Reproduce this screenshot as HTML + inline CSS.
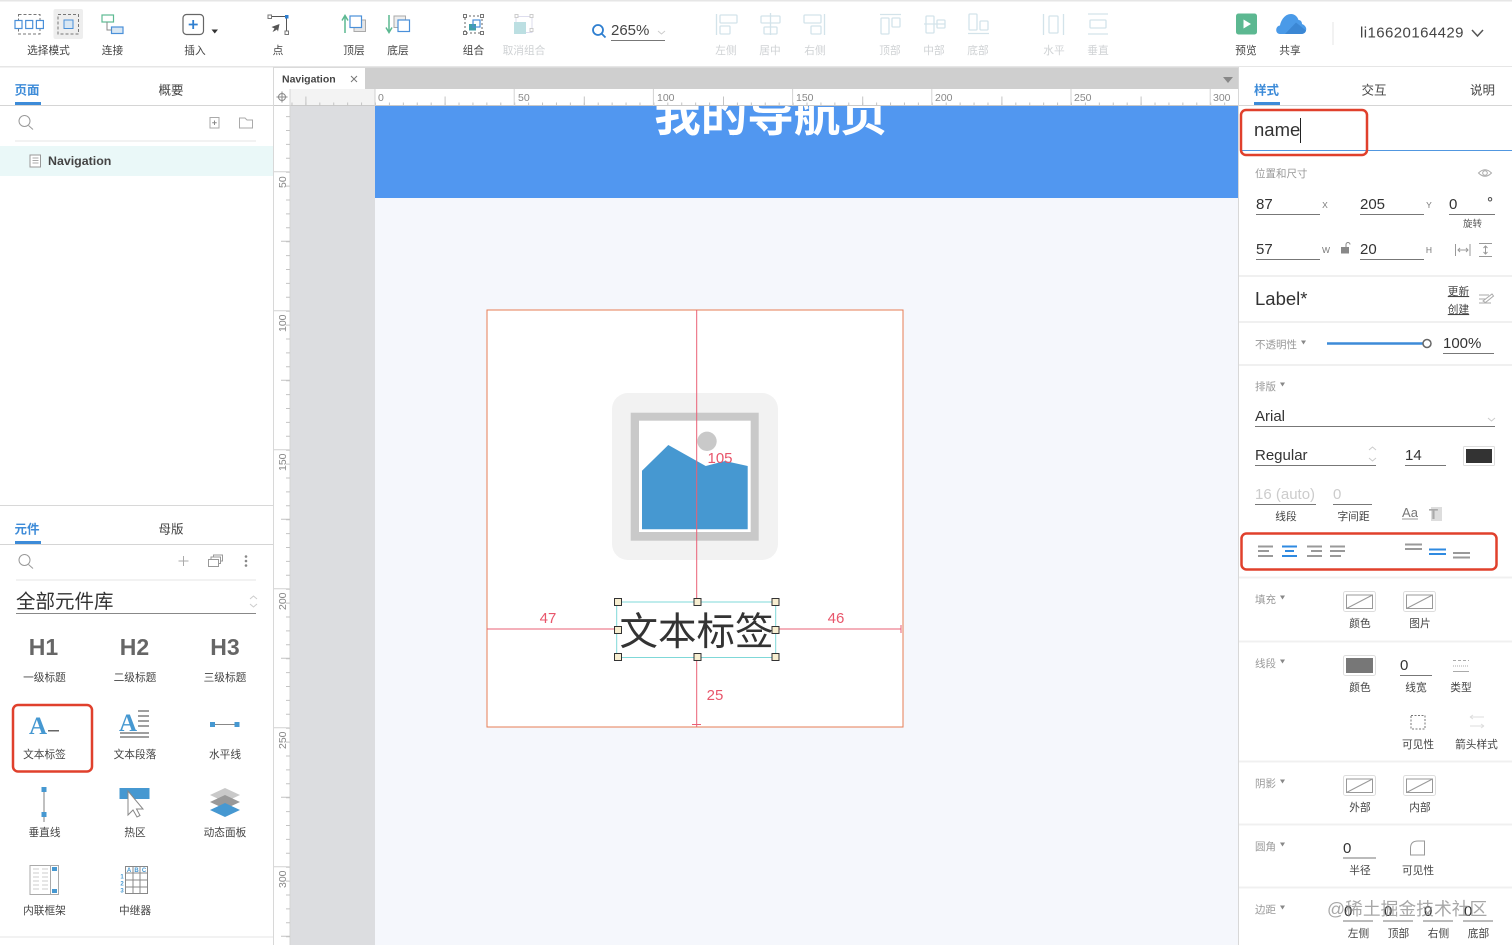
<!DOCTYPE html>
<html><head><meta charset="utf-8">
<style>
html,body{margin:0;padding:0;background:#fff;width:1512px;height:945px;overflow:hidden}
svg{display:block;position:absolute;left:0;top:0;filter:blur(.3px)}
text{font-family:"Liberation Sans","Noto Sans CJK SC",sans-serif;fill:#444}
.m{text-anchor:middle}
.tb{font-size:10.7px;fill:#444;text-anchor:middle}
.fd{font-size:10.7px;fill:#cfd2d4;text-anchor:middle}
.tab{font-size:12.5px;fill:#444;text-anchor:middle}
.act{fill:#3d8bd8;font-weight:700}
.sec{font-size:10.5px;fill:#999}
.lb{font-size:10.7px;fill:#444;text-anchor:middle}
.val{font-size:15px;fill:#333}
.ax{font-size:8.5px;fill:#777;text-anchor:middle}
.rl{font-size:10.5px;fill:#888}
.red{font-size:15px;fill:#e8566b;text-anchor:middle}
.ul{stroke:#777;stroke-width:1;fill:none}
.sp{stroke:#f0f0f0;stroke-width:2}
.g{fill:none;stroke:#888;stroke-width:1}
.fa{fill:none;stroke:#d3e3ea;stroke-width:1.3}
.tri{fill:#888}
.h{fill:#f7eed0;stroke:#333;stroke-width:1}
</style></head>
<body>
<svg width="1512" height="945" viewBox="0 0 1512 945" xmlns="http://www.w3.org/2000/svg">
<rect width="1512" height="945" fill="#fff"/>
<rect width="1512" height="1.5" fill="#e6e6e6"/>

<!-- canvas -->
<rect x="375" y="106" width="863" height="839" fill="#f5f7fc"/>
<rect x="290" y="106" width="85" height="839" fill="#dcdde0"/>
<rect x="375" y="106" width="863" height="92" fill="#5197f0"/>
<text x="770.500" y="131" class="m" style="font-size:46.500px;font-weight:700;fill:#fff">我的导航页</text>

<!-- tab bar + rulers -->
<rect x="274" y="67" width="964" height="22" fill="#cfcfcf"/>
<rect x="274" y="68" width="91" height="21" fill="#fff"/>
<text x="282" y="82.5" style="font-size:10.5px;font-weight:700;fill:#444">Navigation</text>
<path d="M351 76l6 6M357 76l-6 6" stroke="#777" fill="none"/>
<path d="M1223 77h10l-5 6z" fill="#888"/>
<rect x="274" y="89" width="964" height="17" fill="#fff"/>
<rect x="290" y="89" width="85" height="17" fill="#f3f3f3"/>
<rect x="274" y="106" width="16" height="839" fill="#fff"/>
<line x1="274" y1="105.500" x2="1238" y2="105.500" stroke="#c9c9c9"/>
<line x1="290" y1="89" x2="290" y2="945" stroke="#d5d5d5"/>
<circle cx="282" cy="97" r="3.500" fill="none" stroke="#888"/><path d="M282 91.500v11M276.500 97h11" stroke="#888" fill="none"/>
<!-- horizontal ticks -->
<line x1="291.480" y1="104" x2="1238" y2="104" stroke="#c4c4c4" stroke-width="3" stroke-dasharray="1 12.92"/>
<line x1="305.400" y1="101" x2="1238" y2="101" stroke="#c4c4c4" stroke-width="9" stroke-dasharray="1 138.2"/>
<path d="M375 89v17M514.200 89v17M653.400 89v17M792.600 89v17M931.800 89v17M1071 89v17M1210.200 89v17" stroke="#d2d2d2" fill="none"/>
<text x="378" y="101" class="rl">0</text><text x="518" y="101" class="rl">50</text><text x="657" y="101" class="rl">100</text><text x="796" y="101" class="rl">150</text><text x="935" y="101" class="rl">200</text><text x="1074" y="101" class="rl">250</text><text x="1213" y="101" class="rl">300</text>
<!-- vertical ticks -->
<line x1="288" y1="116.100" x2="288" y2="945" stroke="#c4c4c4" stroke-width="4" stroke-dasharray="1 12.9"/>
<path d="M281 241.200h9M281 380.200h9M281 519.200h9M281 658.200h9M281 797.200h9M281 936.200h9" stroke="#c4c4c4" fill="none"/>
<path d="M274 171.700h16M274 310.700h16M274 449.700h16M274 588.700h16M274 727.700h16M274 866.700h16" stroke="#d2d2d2" fill="none"/>
<g class="rl">
<text transform="translate(286,188) rotate(-90)" class="rl">50</text>
<text transform="translate(286,332) rotate(-90)" class="rl">100</text>
<text transform="translate(286,471) rotate(-90)" class="rl">150</text>
<text transform="translate(286,610) rotate(-90)" class="rl">200</text>
<text transform="translate(286,749) rotate(-90)" class="rl">250</text>
<text transform="translate(286,888) rotate(-90)" class="rl">300</text>
</g>

<!-- page frame -->
<rect x="487" y="310" width="416" height="417" fill="#fff" stroke="#e67c55"/>
<rect x="612" y="393" width="166" height="167" rx="16" fill="#f2f2f2"/>
<rect x="630.700" y="412.700" width="128" height="128" fill="#c9c9c9"/>
<rect x="639" y="420.700" width="111.700" height="111.300" fill="#fff"/>
<circle cx="707" cy="441.300" r="9.700" fill="#c9c9c9"/>
<path d="M642 470.700L668.300 445L705.700 466L725 461L747.700 466V529.300H642Z" fill="#4698d1"/>
<path d="M696.700 310V727M487 629H617M777 629H901M901 625V633M692 724.500H701" stroke="#ea6075" fill="none"/>
<text x="720" y="463" class="red">105</text>
<text x="548" y="623" class="red">47</text>
<text x="836" y="623" class="red">46</text>
<text x="715" y="700" class="red">25</text>
<rect x="616.700" y="602" width="159" height="55.500" fill="#fff" stroke="#7fd8d8"/>
<text x="696.500" y="645" class="m" style="font-size:38.500px;fill:#333">文本标签</text>
<rect x="614.500" y="598.500" width="7" height="7" class="h"/><rect x="694" y="598.500" width="7" height="7" class="h"/><rect x="772" y="598.500" width="7" height="7" class="h"/>
<rect x="614.500" y="626.500" width="7" height="7" class="h"/><rect x="772" y="626.500" width="7" height="7" class="h"/>
<rect x="614.500" y="653.500" width="7" height="7" class="h"/><rect x="694" y="653.500" width="7" height="7" class="h"/><rect x="772" y="653.500" width="7" height="7" class="h"/>

<!-- toolbar -->
<rect x="0" y="66" width="1512" height="1.500" fill="#e6e6e6"/>
<rect x="53.500" y="9" width="29.500" height="30" rx="2" fill="#eee"/>
<rect x="18.500" y="14.500" width="21.500" height="19.500" fill="none" stroke="#777" stroke-dasharray="3 2"/>
<g fill="#fff" stroke="#4a90d9" stroke-width="1.200"><rect x="15" y="20.500" width="7" height="8"/><rect x="25.700" y="20.500" width="7" height="8"/><rect x="36.400" y="20.500" width="7" height="8"/></g>
<rect x="58" y="14.500" width="20.500" height="19.500" fill="none" stroke="#777" stroke-dasharray="3 2"/>
<rect x="64" y="20" width="9" height="8.500" fill="#d9e7f3" stroke="#4a90d9"/>
<rect x="102" y="15" width="11.500" height="7" fill="#fff" stroke="#5dba92" stroke-width="1.200"/>
<rect x="111.500" y="27" width="11.500" height="6.500" fill="#d9e7f3" stroke="#4a90d9" stroke-width="1.200"/>
<path d="M107 22v8h4.500" fill="none" stroke="#888"/>
<rect x="183" y="14.500" width="20.500" height="20" rx="3.500" fill="#fff" stroke="#666" stroke-width="1.200"/>
<path d="M193.200 20v9M188.700 24.500h9" stroke="#2f7fd0" stroke-width="1.800" fill="none"/>
<path d="M211.500 29.500h6.500l-3.250 4z" fill="#333"/>
<path d="M270 16.500H286.500V32" fill="none" stroke="#555"/>
<rect x="268" y="15" width="3.500" height="3.500" fill="#fff" stroke="#777"/><rect x="285" y="15" width="3.500" height="3.500" fill="#2f7fd0"/><rect x="285" y="31" width="3.500" height="3.500" fill="#fff" stroke="#777"/>
<path d="M279.500 24L271.500 27L274.500 28.500L272.500 32L274.500 31L277 29.500L278 31.500Z" fill="#555"/>
<path d="M345 33V17M342 20.500L345 15.500L348 20.500" fill="none" stroke="#5cb891" stroke-width="1.500"/>
<rect x="354" y="20" width="11.500" height="11.500" fill="#e5e5e5" stroke="#aaa"/><rect x="350" y="16" width="11.500" height="11.500" fill="#fff" stroke="#4a90d9" stroke-width="1.200"/>
<path d="M389 15V31M386 27.500L389 32.500L392 27.500" fill="none" stroke="#5cb891" stroke-width="1.500"/>
<rect x="394" y="16" width="11.500" height="11.500" fill="#eee" stroke="#aaa"/><rect x="398" y="20" width="11.500" height="11.500" fill="#fff" stroke="#4a90d9" stroke-width="1.200"/>
<rect x="465" y="16" width="17" height="17" fill="none" stroke="#666" stroke-dasharray="2 2"/>
<g fill="#fff" stroke="#777"><rect x="463.500" y="14.500" width="3" height="3"/><rect x="480.500" y="14.500" width="3" height="3"/><rect x="463.500" y="31.500" width="3" height="3"/><rect x="480.500" y="31.500" width="3" height="3"/></g>
<rect x="469" y="24" width="7" height="6.500" fill="#41a0a8"/><rect x="473" y="20" width="7" height="7" fill="none" stroke="#4a90d9" stroke-width="1.200"/>
<rect x="516" y="16.500" width="16" height="16" fill="none" stroke="#dde"/>
<path d="M514 22H526V34H514Z" fill="#bcdfe2"/>
<g fill="#fff" stroke="#ccc"><rect x="530" y="14.500" width="3" height="3"/><rect x="530" y="28.500" width="3" height="3"/><rect x="515" y="14.500" width="3" height="3"/></g>
<text x="48.500" y="54" class="tb">选择模式</text><text x="112.500" y="54" class="tb">连接</text><text x="195" y="54" class="tb">插入</text><text x="278" y="54" class="tb">点</text><text x="354" y="54" class="tb">顶层</text><text x="398" y="54" class="tb">底层</text><text x="473.500" y="54" class="tb">组合</text><text x="524" y="54" class="fd">取消组合</text>

<circle cx="598" cy="30" r="5" fill="none" stroke="#2f7fd0" stroke-width="1.800"/><path d="M601.500 33.500L605.500 37.500" stroke="#2f7fd0" stroke-width="1.800" fill="none"/>
<text x="611" y="35" class="val" style="fill:#444">265%</text>
<line x1="611" y1="40.500" x2="665" y2="40.500" class="ul"/>
<path d="M658 31l3.500 3 3.500-3" fill="none" stroke="#ccc"/>

<!-- disabled align icons -->
<g class="fa">
<path d="M716.500 14v21"/><rect x="720" y="15" width="17" height="8" rx="1"/><rect x="720" y="26" width="10" height="8" rx="1"/>
<path d="M770.500 13v22"/><rect x="761" y="16" width="19" height="7" rx="1"/><rect x="764" y="27" width="13" height="7" rx="1"/>
<path d="M824.500 14v21"/><rect x="804" y="15" width="17" height="8" rx="1"/><rect x="811" y="26" width="10" height="8" rx="1"/>
<path d="M880 14.500h21"/><rect x="881" y="18" width="8" height="16" rx="1"/><rect x="892" y="18" width="8" height="9" rx="1"/>
<path d="M924 24h21"/><rect x="926" y="16" width="8" height="17" rx="1"/><rect x="937" y="20" width="8" height="8" rx="1"/>
<path d="M968 33.500h21"/><rect x="969" y="14" width="8" height="16" rx="1"/><rect x="980" y="21" width="8" height="9" rx="1"/>
<path d="M1043.500 14v21M1063.500 14v21"/><rect x="1049" y="16" width="9" height="17" rx="1"/>
<path d="M1088 14h20M1088 34h20"/><rect x="1090" y="20" width="16" height="8" rx="1"/>
</g>
<text x="726" y="54" class="fd">左侧</text><text x="770" y="54" class="fd">居中</text><text x="815" y="54" class="fd">右侧</text><text x="890" y="54" class="fd">顶部</text><text x="934" y="54" class="fd">中部</text><text x="978" y="54" class="fd">底部</text><text x="1054" y="54" class="fd">水平</text><text x="1098" y="54" class="fd">垂直</text>

<rect x="1236" y="13.500" width="21" height="21" rx="2.500" fill="#5cb891"/>
<path d="M1243.500 19.500L1251 24L1243.500 28.500Z" fill="#fff"/>
<path d="M1280 34C1275 34 1275 26 1280 25.500C1281 20 1285 14 1291 14C1295 14 1297.500 17 1298.500 20C1301 20 1302 22 1302 24C1305 25 1307 28 1306 30.500C1305.500 32.500 1304 34 1301 34Z" fill="#4a9ae8"/>
<path d="M1285 34L1296 22.500L1306 30.500C1305.500 32.500 1304 34 1301 34Z" fill="#3b87d4"/>
<text x="1246" y="54" class="tb">预览</text><text x="1290" y="54" class="tb">共享</text>
<line x1="1333" y1="22" x2="1333" y2="45" stroke="#eee" stroke-width="1.500"/>
<text x="1360" y="37.500" class="val" style="fill:#444;letter-spacing:.42px">li16620164429</text>
<path d="M1472 30l5.500 6 5.500-6" fill="none" stroke="#555" stroke-width="1.500"/>

<!-- left panel -->
<line x1="273.500" y1="67" x2="273.500" y2="945" stroke="#d8d8d8"/>
<text x="27" y="94.500" class="tab act">页面</text><text x="171" y="94.500" class="tab">概要</text>
<rect x="15" y="102" width="26" height="3" fill="#3d8bd8"/>
<line x1="0" y1="105.500" x2="273" y2="105.500" stroke="#d5d5d5"/>
<circle cx="24.500" cy="121" r="5.500" fill="none" stroke="#999"/><path d="M28.500 125.500L33 129.500" stroke="#999" fill="none"/>
<rect x="210" y="117.500" width="9" height="10.500" fill="none" stroke="#aaa"/><path d="M214.500 120.500v4.500M212.200 122.800h4.500" stroke="#888" fill="none"/>
<path d="M239.500 118H245L247 120H252.500V128H239.500Z" fill="none" stroke="#aaa"/>
<line x1="15" y1="141" x2="256" y2="141" stroke="#eee" stroke-width="1.500"/>
<rect x="0" y="146" width="273" height="30" fill="#eaf8f8"/>
<rect x="30" y="155" width="10.500" height="12" fill="#fff" stroke="#999"/><path d="M32.500 158h6M32.500 160.500h6M32.500 163h6" stroke="#aaa" fill="none"/>
<text x="48" y="165" style="font-size:12.400px;font-weight:700;fill:#444">Navigation</text>

<line x1="0" y1="505.500" x2="273" y2="505.500" stroke="#d8d8d8"/>
<text x="27" y="533.500" class="tab act">元件</text><text x="171" y="533.500" class="tab">母版</text>
<rect x="15" y="541" width="26" height="3" fill="#3d8bd8"/>
<line x1="0" y1="544.500" x2="273" y2="544.500" stroke="#d5d5d5"/>
<circle cx="24.500" cy="560" r="5.500" fill="none" stroke="#999"/><path d="M28.500 564.500L33 568.500" stroke="#999" fill="none"/>
<path d="M183.500 556v10M178.500 561h10" stroke="#aaa" fill="none"/>
<path d="M208.500 559.500h10v7h-10zM211 559.500v-2.500h9.500v6.500h-2M213.500 557v-2h9v6h-2" fill="none" stroke="#999"/>
<g fill="#888"><circle cx="246" cy="556.500" r="1.300"/><circle cx="246" cy="561" r="1.300"/><circle cx="246" cy="565.500" r="1.300"/></g>
<line x1="16" y1="580" x2="256" y2="580" stroke="#eee" stroke-width="1.500"/>
<text x="16" y="608" style="font-size:19.500px;fill:#333">全部元件库</text>
<line x1="16" y1="613.500" x2="256" y2="613.500" stroke="#888"/>
<path d="M250 599l3.500-3 3.500 3M250 604l3.500 3 3.500-3" fill="none" stroke="#ccc"/>
<text x="43.500" y="655" class="m" style="font-size:23px;font-weight:700;fill:#666">H1</text>
<text x="134.500" y="655" class="m" style="font-size:23px;font-weight:700;fill:#666">H2</text>
<text x="225" y="655" class="m" style="font-size:23px;font-weight:700;fill:#666">H3</text>
<text x="44.500" y="681" class="lb">一级标题</text><text x="135" y="681" class="lb">二级标题</text><text x="225" y="681" class="lb">三级标题</text>
<text x="38" y="734" class="m" style="font-family:'Liberation Serif',serif;font-size:25px;font-weight:700;fill:#4698d1">A</text>
<rect x="48" y="730" width="11" height="1.500" fill="#666"/>
<text x="128" y="731" class="m" style="font-family:'Liberation Serif',serif;font-size:25px;font-weight:700;fill:#4698d1">A</text>
<path d="M138 711h11M138 716h11M138 721h11M138 726h11M120 733h29M120 737h29" stroke="#666" stroke-width="1.200" fill="none"/>
<path d="M212 724.500h26" stroke="#888" fill="none"/><rect x="210" y="722" width="5" height="5" fill="#4698d1"/><rect x="234.500" y="722" width="5" height="5" fill="#4698d1"/>
<text x="44.500" y="758" class="lb">文本标签</text><text x="135" y="758" class="lb">文本段落</text><text x="225" y="758" class="lb">水平线</text>
<path d="M44 790v32" stroke="#aaa" stroke-width="1.500" fill="none"/><rect x="41.500" y="787" width="5" height="5" fill="#4698d1"/><rect x="41.500" y="812" width="5" height="5" fill="#4698d1"/>
<rect x="119.500" y="788" width="30" height="11" fill="#4698d1"/>
<path d="M128 791V815L133 810L137 817L140 815.500L136.500 809H143Z" fill="#fff" stroke="#888"/>
<path d="M225 788L240 795L225 802L210 795Z" fill="#c9c9c9"/><path d="M225 795L240 802L225 809L210 802Z" fill="#999"/><path d="M225 803L240 810L225 817L210 810Z" fill="#4698d1"/>
<text x="44.500" y="836" class="lb">垂直线</text><text x="135" y="836" class="lb">热区</text><text x="225" y="836" class="lb">动态面板</text>
<rect x="30" y="865.500" width="28.500" height="29" fill="#fff" stroke="#aaa"/>
<path d="M50.500 865.500v29" stroke="#aaa" fill="none"/><rect x="52" y="867" width="5" height="4" fill="#4698d1"/><rect x="52" y="889" width="5" height="4" fill="#4698d1"/>
<path d="M33 869h6M42 869h6M33 873h6M42 873h6M33 877h6M42 877h6M33 881h6M42 881h6M33 885h6M42 885h6M33 889h6M42 889h6" stroke="#ccc" fill="none"/>
<path d="M125.500 866.500h22v27h-22zM125.500 873h22M125.500 880h22M125.500 887h22M133 866.500v27M140 866.500v27" fill="#fff" stroke="#888"/>
<rect x="126" y="867" width="6.500" height="5.500" fill="#fff"/>
<text x="129" y="872" class="m" style="font-size:6px;font-weight:700;fill:#4698d1">A</text><text x="136.500" y="872" class="m" style="font-size:6px;font-weight:700;fill:#4698d1">B</text><text x="144" y="872" class="m" style="font-size:6px;font-weight:700;fill:#4698d1">C</text>
<text x="122" y="878.500" class="m" style="font-size:6px;font-weight:700;fill:#4698d1">1</text><text x="122" y="885.500" class="m" style="font-size:6px;font-weight:700;fill:#4698d1">2</text><text x="122" y="892.500" class="m" style="font-size:6px;font-weight:700;fill:#4698d1">3</text>
<text x="44.500" y="914" class="lb">内联框架</text><text x="135" y="914" class="lb">中继器</text>
<line x1="0" y1="937" x2="273" y2="937" stroke="#eee" stroke-width="1.500"/>
<rect x="13" y="705" width="79" height="66.500" rx="5" fill="none" stroke="#e0402c" stroke-width="2.500"/>

<!-- right panel -->
<rect x="1238" y="67" width="274" height="878" fill="#fff"/>
<line x1="1238.500" y1="67" x2="1238.500" y2="945" stroke="#d8d8d8"/>
<text x="1266.500" y="94.500" class="tab act">样式</text><text x="1374" y="94.500" class="tab">交互</text><text x="1482.500" y="94.500" class="tab">说明</text>
<rect x="1254" y="102" width="26" height="3" fill="#3d8bd8"/>
<line x1="1239" y1="105.500" x2="1512" y2="105.500" stroke="#d5d5d5"/>
<text x="1254" y="136" style="font-size:18.500px;fill:#333">name</text>
<line x1="1300.500" y1="118" x2="1300.500" y2="143" stroke="#222"/>
<line x1="1240" y1="150.500" x2="1512" y2="150.500" stroke="#5197e0"/>
<rect x="1241" y="110" width="126" height="45" rx="5" fill="none" stroke="#e0402c" stroke-width="2.500"/>

<text x="1255" y="177" class="sec">位置和尺寸</text>
<path d="M1478.500 173Q1485 166.500 1491.500 173Q1485 179.500 1478.500 173Z" fill="none" stroke="#aaa"/><circle cx="1485" cy="173" r="2.300" fill="none" stroke="#aaa"/>
<text x="1256" y="209" class="val">87</text><line x1="1256" y1="214.500" x2="1320" y2="214.500" class="ul"/><text x="1325" y="208" class="ax">X</text>
<text x="1360" y="209" class="val">205</text><line x1="1360" y1="214.500" x2="1424" y2="214.500" class="ul"/><text x="1429" y="208" class="ax">Y</text>
<text x="1449" y="209" class="val">0</text><text x="1490" y="207" class="m" style="font-size:14px;font-weight:700;fill:#555">°</text><line x1="1449" y1="214.500" x2="1495" y2="214.500" class="ul"/>
<text x="1472.500" y="227" class="m" style="font-size:9.500px;fill:#555">旋转</text>
<text x="1256" y="254" class="val">57</text><line x1="1256" y1="259.500" x2="1320" y2="259.500" class="ul"/><text x="1326" y="253" class="ax">W</text>
<rect x="1341" y="247" width="8" height="6.500" fill="#888"/><path d="M1346 247v-2.500a2 2 0 0 1 4 0" fill="none" stroke="#888"/>
<text x="1360" y="254" class="val">20</text><line x1="1360" y1="259.500" x2="1424" y2="259.500" class="ul"/><text x="1429" y="253" class="ax">H</text>
<path d="M1455.500 244v12M1470 244v12M1458 250h10M1460 248l-2 2 2 2M1466 248l2 2-2 2M1479 243.500h13M1479 256.500h13M1485.500 246v8M1483.500 248l2-2 2 2M1483.500 252l2 2 2-2" fill="none" stroke="#999"/>

<line x1="1239" y1="276" x2="1512" y2="276" class="sp"/>
<text x="1255" y="305" style="font-size:18.500px;fill:#333">Label*</text>
<text x="1458.500" y="295" class="lb" style="text-decoration:underline">更新</text><text x="1458.500" y="313" class="lb" style="text-decoration:underline">创建</text>
<path d="M1479 295h10M1479 299h7M1479 303h12M1483 301l9-7 1.500 2-8 6.500z" fill="none" stroke="#aaa"/>
<line x1="1239" y1="322" x2="1512" y2="322" class="sp"/>
<text x="1255" y="348" class="sec">不透明性</text><path d="M1301 340.500h5l-2.500 4z" class="tri"/>
<line x1="1327" y1="343.500" x2="1424" y2="343.500" stroke="#3d8bd8" stroke-width="2.500"/>
<circle cx="1427" cy="343.500" r="4" fill="#fff" stroke="#666" stroke-width="1.500"/>
<text x="1443" y="348" class="val">100%</text><line x1="1443" y1="353.500" x2="1494" y2="353.500" class="ul"/>
<line x1="1239" y1="365" x2="1512" y2="365" class="sp"/>
<text x="1255" y="390" class="sec">排版</text><path d="M1280 382.500h5l-2.500 4z" class="tri"/>
<text x="1255" y="421" class="val">Arial</text><line x1="1255" y1="426.500" x2="1495" y2="426.500" class="ul"/>
<path d="M1488 418l3.500 3 3.500-3" fill="none" stroke="#ccc"/>
<text x="1255" y="460" class="val">Regular</text><line x1="1255" y1="465.500" x2="1376" y2="465.500" class="ul"/>
<path d="M1369 450l3.500-3 3.500 3M1369 458l3.500 3 3.500-3" fill="none" stroke="#ccc"/>
<text x="1405" y="460" class="val">14</text><line x1="1405" y1="465.500" x2="1446" y2="465.500" class="ul"/>
<rect x="1463.500" y="446.500" width="31" height="19" rx="1" fill="#fff" stroke="#ddd"/><rect x="1466" y="449" width="26" height="14" fill="#333"/>
<text x="1255" y="499" class="val" style="fill:#ccc">16 (auto)</text><line x1="1255" y1="504.500" x2="1316" y2="504.500" class="ul"/>
<text x="1333" y="499" class="val" style="fill:#ccc">0</text><line x1="1333" y1="504.500" x2="1372" y2="504.500" class="ul"/>
<text x="1286" y="520" class="lb">线段</text><text x="1353.500" y="520" class="lb">字间距</text>
<text x="1410" y="517" class="m" style="font-size:13px;fill:#777">Aa</text><line x1="1402" y1="519" x2="1418" y2="519" stroke="#999"/>
<rect x="1431" y="507" width="11" height="14" fill="#ddd"/><text x="1433.500" y="519" class="m" style="font-size:15px;font-weight:700;fill:#aaa">T</text>

<g stroke="#999" stroke-width="2" fill="none">
<path d="M1258 546.500h15M1258 551h11M1258 556h15"/>
<path d="M1307 546.500h15M1311 551h11M1307 556h15"/>
<path d="M1330 546.500h15M1330 551h15M1330 556h11"/>
<path d="M1405 544.500h17M1405 549h17"/>
<path d="M1453 553h17M1453 557.500h17"/>
</g>
<g stroke="#2f8ae0" stroke-width="2" fill="none">
<path d="M1282 546.500h15M1285 551h9M1282 556h15"/>
<path d="M1429 549.500h17M1429 554h17"/>
</g>
<rect x="1241.500" y="533.500" width="255" height="36" rx="5" fill="none" stroke="#e0402c" stroke-width="2.500"/>
<line x1="1239" y1="577.500" x2="1512" y2="577.500" class="sp"/>

<g fill="#fff">
<rect x="1343.500" y="591.500" width="32" height="20" rx="2" stroke="#ddd"/><rect x="1346.500" y="595" width="26" height="13.500" stroke="#999"/><path d="M1346.500 608.500L1372.500 595" stroke="#999"/>
<rect x="1403.500" y="591.500" width="32" height="20" rx="2" stroke="#ddd"/><rect x="1406.500" y="595" width="26" height="13.500" stroke="#999"/><path d="M1406.500 608.500L1432.500 595" stroke="#999"/>
<rect x="1343.500" y="775.500" width="32" height="20" rx="2" stroke="#ddd"/><rect x="1346.500" y="779" width="26" height="13.500" stroke="#999"/><path d="M1346.500 792.500L1372.500 779" stroke="#999"/>
<rect x="1403.500" y="775.500" width="32" height="20" rx="2" stroke="#ddd"/><rect x="1406.500" y="779" width="26" height="13.500" stroke="#999"/><path d="M1406.500 792.500L1432.500 779" stroke="#999"/>
</g>
<text x="1255" y="603" class="sec">填充</text><path d="M1280 595.500h5l-2.500 4z" class="tri"/>
<text x="1360" y="627" class="lb">颜色</text><text x="1420" y="627" class="lb">图片</text>
<line x1="1239" y1="641.500" x2="1512" y2="641.500" class="sp"/>
<text x="1255" y="667" class="sec">线段</text><path d="M1280 659.500h5l-2.500 4z" class="tri"/>
<rect x="1343.500" y="655.500" width="32" height="20" rx="2" fill="#fff" stroke="#ddd"/><rect x="1346" y="658" width="27" height="15" fill="#777"/>
<text x="1400" y="670" class="val">0</text><line x1="1400" y1="675.500" x2="1432" y2="675.500" class="ul"/>
<path d="M1453 660.500h16" stroke="#aaa" stroke-dasharray="3 2" fill="none"/><path d="M1453 666h16" stroke="#aaa" stroke-dasharray="1 1" fill="none"/><path d="M1453 671.500h16" stroke="#aaa" fill="none"/>
<text x="1360" y="691" class="lb">颜色</text><text x="1416" y="691" class="lb">线宽</text><text x="1461" y="691" class="lb">类型</text>
<rect x="1411" y="715.500" width="14" height="13.500" fill="none" stroke="#777" stroke-dasharray="2 1.500"/>
<path d="M1470 717h14M1470 717l3-2M1470 717l3 2M1470 726h14M1484 726l-3-2M1484 726l-3 2" fill="none" stroke="#ddd"/>
<text x="1418" y="748" class="lb">可见性</text><text x="1476.500" y="748" class="lb">箭头样式</text>
<line x1="1239" y1="761.500" x2="1512" y2="761.500" class="sp"/>
<text x="1255" y="787" class="sec">阴影</text><path d="M1280 779.500h5l-2.500 4z" class="tri"/>
<text x="1360" y="811" class="lb">外部</text><text x="1420" y="811" class="lb">内部</text>
<line x1="1239" y1="824.500" x2="1512" y2="824.500" class="sp"/>
<text x="1255" y="850" class="sec">圆角</text><path d="M1280 842.500h5l-2.500 4z" class="tri"/>
<text x="1343" y="853" class="val">0</text><line x1="1343" y1="858" x2="1376" y2="858" class="ul"/>
<path d="M1410.500 855V848Q1410.500 841 1418 841H1424.500V855Z" fill="none" stroke="#999"/>
<text x="1360" y="874" class="lb">半径</text><text x="1418" y="874" class="lb">可见性</text>
<line x1="1239" y1="887.500" x2="1512" y2="887.500" class="sp"/>
<text x="1255" y="913" class="sec">边距</text><path d="M1280 905.500h5l-2.500 4z" class="tri"/>
<text x="1344" y="916" class="val">0</text><text x="1384" y="916" class="val">0</text><text x="1424" y="916" class="val">0</text><text x="1464" y="916" class="val">0</text>
<path d="M1343 921h30M1383 921h30M1423 921h30M1463 921h30" class="ul"/>
<text x="1358.500" y="937" class="lb">左侧</text><text x="1398.500" y="937" class="lb">顶部</text><text x="1438.500" y="937" class="lb">右侧</text><text x="1478.500" y="937" class="lb">底部</text>
<text x="1327" y="915" style="font-size:17.800px;fill:#8a8a8a;opacity:.75">@稀土掘金技术社区</text>
</svg>
</body></html>
